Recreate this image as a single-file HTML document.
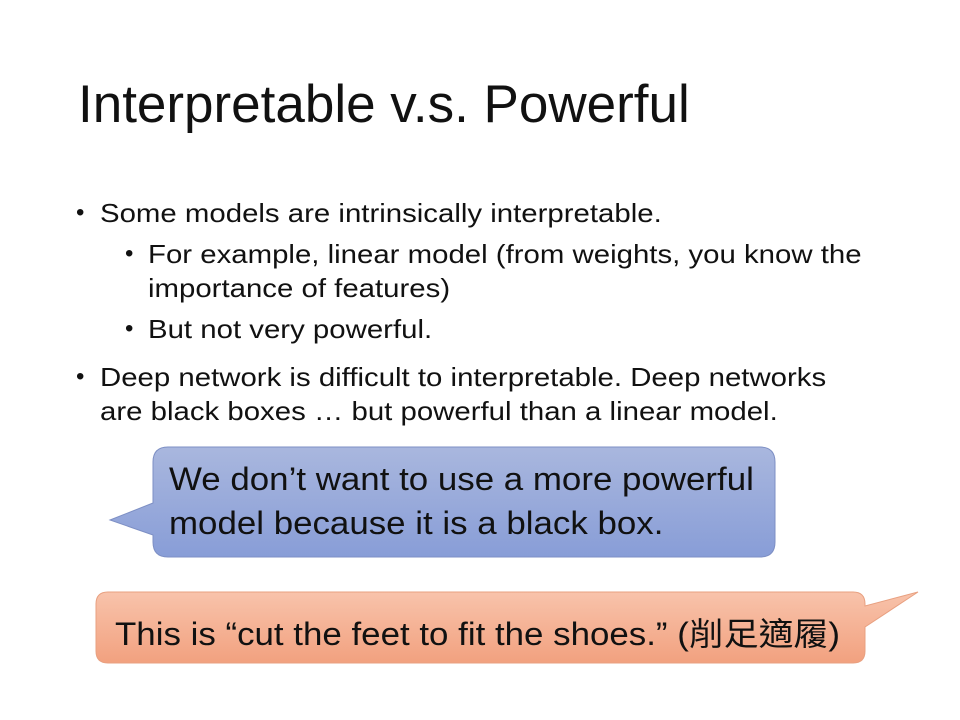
<!DOCTYPE html>
<html><head><meta charset="utf-8"><style>
body{margin:0;width:960px;height:720px;background:#fff;position:relative;overflow:hidden;font-family:"Liberation Sans","Noto Sans CJK TC",sans-serif;color:#111}
.t{position:absolute;white-space:nowrap;transform-origin:0 0}
.b{font-size:26px;transform:scaleX(1.13)}
.c{font-size:32px;transform:scaleX(1.09)}
</style></head><body>
<div class="t" style="left:78px;top:74px;font-size:53px">Interpretable v.s. Powerful</div>
<div class="t" style="left:76px;top:199px;font-size:24px">•</div>
<div class="t b" style="left:100px;top:198px">Some models are intrinsically interpretable.</div>
<div class="t" style="left:125px;top:240px;font-size:24px">•</div>
<div class="t b" style="left:148px;top:239px">For example, linear model (from weights, you know the</div>
<div class="t b" style="left:148px;top:273px">importance of features)</div>
<div class="t" style="left:125px;top:315px;font-size:24px">•</div>
<div class="t b" style="left:148px;top:314px">But not very powerful.</div>
<div class="t" style="left:76px;top:363px;font-size:24px">•</div>
<div class="t b" style="left:100px;top:362px">Deep network is difficult to interpretable. Deep networks</div>
<div class="t b" style="left:100px;top:396px">are black boxes … but powerful than a linear model.</div>
<svg style="position:absolute;left:0;top:0" width="960" height="720">
<defs>
<linearGradient id="b" x1="0" y1="0" x2="0" y2="1"><stop offset="0" stop-color="#a9b7de"/><stop offset="1" stop-color="#889dd7"/></linearGradient>
<linearGradient id="o" x1="0" y1="0" x2="0" y2="1"><stop offset="0" stop-color="#f8c3ab"/><stop offset="1" stop-color="#f2a17f"/></linearGradient>
</defs>
<path d="M168,447 H760 Q775,447 775,462 V542 Q775,557 760,557 H168 Q153,557 153,542 V535 L110,520 L153,503 V462 Q153,447 168,447 Z" fill="url(#b)" stroke="#7d8fc4" stroke-width="1"/>
<path d="M108,592 H853 Q865,592 865,604 V606 L918,592 L865,627 V651 Q865,663 853,663 H108 Q96,663 96,651 V604 Q96,592 108,592 Z" fill="url(#o)" stroke="#e8a080" stroke-width="1"/>
</svg>
<div class="t c" style="left:169px;top:461px">We don’t want to use a more powerful</div>
<div class="t c" style="left:169px;top:505px">model because it is a black box.</div>
<div class="t c" style="left:115px;top:609px">This is “cut the feet to fit the shoes.” (削足適履)</div>
</body></html>
